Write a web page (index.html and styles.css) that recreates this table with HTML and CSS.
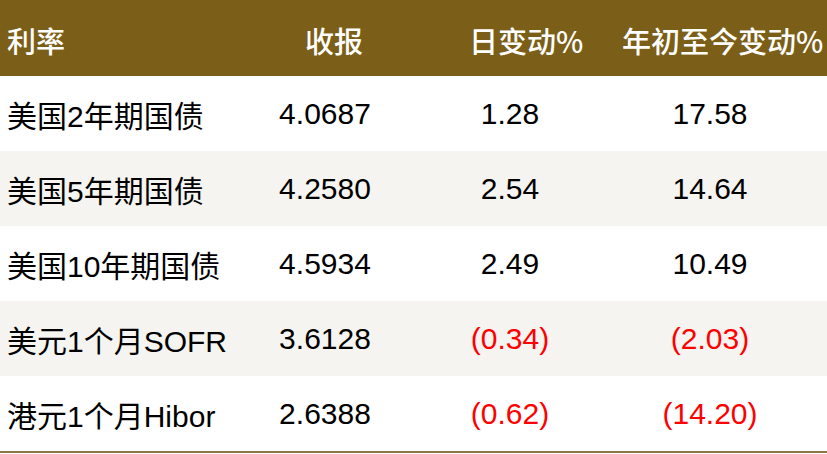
FILE: index.html
```html
<!DOCTYPE html>
<html lang="zh">
<head>
<meta charset="utf-8">
<title>利率</title>
<link rel="stylesheet" href="styles.css">
</head>
<body>
<div class="table">
  <div class="row head">
    <div class="cell c1">利率</div>
    <div class="cell c2">收报</div>
    <div class="cell c3">日变动%</div>
    <div class="cell c4">年初至今变动%</div>
  </div>
  <div class="row">
    <div class="cell c1">美国2年期国债</div>
    <div class="cell c2">4.0687</div>
    <div class="cell c3">1.28</div>
    <div class="cell c4">17.58</div>
  </div>
  <div class="row alt">
    <div class="cell c1">美国5年期国债</div>
    <div class="cell c2">4.2580</div>
    <div class="cell c3">2.54</div>
    <div class="cell c4">14.64</div>
  </div>
  <div class="row">
    <div class="cell c1">美国10年期国债</div>
    <div class="cell c2">4.5934</div>
    <div class="cell c3">2.49</div>
    <div class="cell c4">10.49</div>
  </div>
  <div class="row alt">
    <div class="cell c1">美元1个月SOFR</div>
    <div class="cell c2">3.6128</div>
    <div class="cell c3 neg">(0.34)</div>
    <div class="cell c4 neg">(2.03)</div>
  </div>
  <div class="row last">
    <div class="cell c1">港元1个月Hibor</div>
    <div class="cell c2">2.6388</div>
    <div class="cell c3 neg">(0.62)</div>
    <div class="cell c4 neg">(14.20)</div>
  </div>
</div>
</body>
</html>
```
FILE: styles.css
```css
html, body {
  margin: 0;
  padding: 0;
  background: #ffffff;
}
body {
  width: 827px;
  height: 454px;
  overflow: hidden;
  font-family: "Liberation Sans", "Noto Sans CJK SC", sans-serif;
  font-size: 30px;
  color: #000000;
}
.table {
  display: flex;
  flex-direction: column;
  width: 827px;
}
.row {
  display: grid;
  grid-template-columns: 250px 150px 220px 180px 27px;
  height: 75px;
  align-items: center;
  background: #ffffff;
}
.row.alt {
  background: #f5f4f1;
}
.row.last {
  border-bottom: 2px solid #8c7748;
}
.cell {
  white-space: nowrap;
  text-align: center;
}
.cell.c1 {
  text-align: left;
  padding-left: 7px;
}
.head {
  height: 76px;
  background: #7b5e17;
  color: #ffffff;
  font-weight: 500;
  font-family: "Noto Sans CJK SC", "Liberation Sans", sans-serif;
  font-size: 29px;
  padding-top: 3px;
  box-sizing: border-box;
}
.head .cell {
  text-align: left;
}
.head .c2 {
  padding-left: 55px;
}
.head .c3 {
  padding-left: 69px;
}
.head .c4 {
  padding-left: 2px;
}
.neg {
  color: #ff0000;
}
```
